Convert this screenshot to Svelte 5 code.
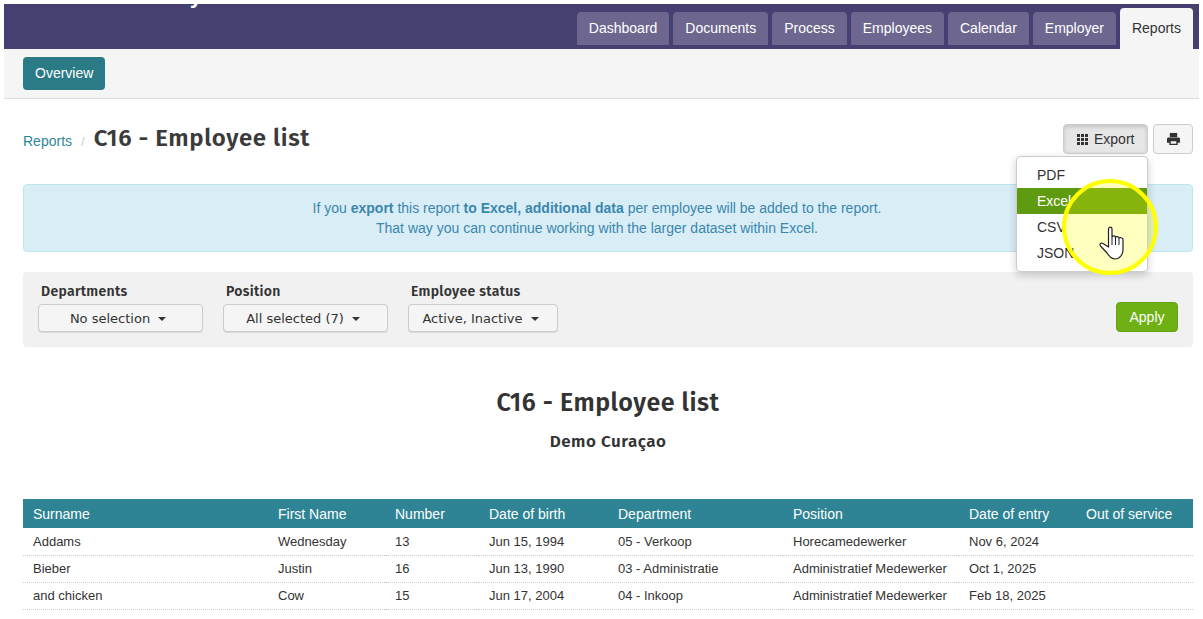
<script>
	const tabs = ['Dashboard', 'Documents', 'Process', 'Employees', 'Calendar', 'Employer'];

	const filters = [
		{ label: 'Departments', value: 'No selection', width: 165 },
		{ label: 'Position', value: 'All selected (7)', width: 165 },
		{ label: 'Employee status', value: 'Active, Inactive', width: 150 }
	];

	const columns = ['Surname', 'First Name', 'Number', 'Date of birth', 'Department', 'Position', 'Date of entry', 'Out of service'];

	const rows = [
		['Addams', 'Wednesday', '13', 'Jun 15, 1994', '05 - Verkoop', 'Horecamedewerker', 'Nov 6, 2024', ''],
		['Bieber', 'Justin', '16', 'Jun 13, 1990', '03 - Administratie', 'Administratief Medewerker', 'Oct 1, 2025', ''],
		['and chicken', 'Cow', '15', 'Jun 17, 2004', '04 - Inkoop', 'Administratief Medewerker', 'Feb 18, 2025', '']
	];
</script>

<div class="page">
	<header class="topbar">
		<span class="brand">y</span>
		<nav class="tabs">
			{#each tabs as tab}
				<a class="tab" href="#top">{tab}</a>
			{/each}
			<a class="tab active" href="#top">Reports</a>
		</nav>
	</header>

	<div class="subnav">
		<button class="overview">Overview</button>
	</div>

	<main class="content">
		<div class="titlebar">
			<div class="crumbs">
				<a href="#top">Reports</a>
				<span class="slash">/</span>
				<h1>C16 - Employee list</h1>
			</div>
			<div class="actions">
				<button class="btn pressed">
					<svg width="11" height="11" viewBox="0 0 11 11" fill="#333">
						<rect x="0" y="0" width="3" height="3" /><rect x="4" y="0" width="3" height="3" /><rect x="8" y="0" width="3" height="3" />
						<rect x="0" y="4" width="3" height="3" /><rect x="4" y="4" width="3" height="3" /><rect x="8" y="4" width="3" height="3" />
						<rect x="0" y="8" width="3" height="3" /><rect x="4" y="8" width="3" height="3" /><rect x="8" y="8" width="3" height="3" />
					</svg>
					Export
				</button>
				<button class="btn print" aria-label="Print">
					<svg width="13" height="14" viewBox="0 0 14 14" fill="#333">
						<path d="M3 0.500h8v4.500H3z" />
						<path fill-rule="evenodd" d="M1.500 5.500h11A1.500 1.500 0 0 1 14 7v4h-2.500v2.500h-9V11H0V7a1.500 1.500 0 0 1 1.500-1.500zM4 9.500v2.500h6V9.500z" />
					</svg>
				</button>

				<div class="menu">
					<div class="item">PDF</div>
					<div class="item hover">Excel</div>
					<div class="item">CSV</div>
					<div class="item">JSON</div>
				</div>

				<div class="spot"></div>
				<svg class="hand" width="27" height="34" viewBox="0 0 27 34">
					<path d="M9.500 3c0-2.500 3.500-2.500 3.500 0v8c0-1.500 3.500-1.500 3.500.5 0-1.200 3.500-1.200 3.500.8 0-1 4-.8 4 1.200V24c0 4-3 9-8 9-4 0-6-3-8-6l-6.500-7c-1.500-2 .5-3.500 2.500-2.500L9.500 21z" fill="#fff" stroke="#222" stroke-width="1.200" stroke-linejoin="round" />
					<path d="M13 11v8M16.500 11.500v7.500M20 12.300v6.700" stroke="#222" stroke-width="1" fill="none" />
				</svg>
			</div>
		</div>

		<div class="notice">
			<p>If you <strong>export</strong> this report <strong>to Excel, additional data</strong> per employee will be added to the report.</p>
			<p>That way you can continue working with the larger dataset within Excel.</p>
		</div>

		<div class="filters">
			{#each filters as filter}
				<div class="filter" style="width: {filter.width}px">
					<span class="filter-label">{filter.label}</span>
					<button class="select">{filter.value}<i class="caret"></i></button>
				</div>
			{/each}
			<button class="apply">Apply</button>
		</div>

		<div class="report-head">
			<h2>C16 - Employee list</h2>
			<h3>Demo Curaçao</h3>
		</div>

		<table>
			<thead>
				<tr>
					{#each columns as col}
						<th>{col}</th>
					{/each}
				</tr>
			</thead>
			<tbody>
				{#each rows as row}
					<tr>
						{#each row as cell}
							<td>{cell}</td>
						{/each}
					</tr>
				{/each}
			</tbody>
		</table>
	</main>
</div>

<style>
	:global(body) {
		margin: 0;
		background: #fff;
	}

	.page {
		width: 1203px;
		height: 619px;
		overflow: hidden;
		box-sizing: border-box;
		padding: 4px 4px 0;
		font-family: 'Liberation Sans', Arial, sans-serif;
		font-size: 14px;
		color: #333;
	}

	.topbar {
		position: relative;
		height: 45px;
		background: #463f72;
		display: flex;
		justify-content: flex-end;
		align-items: flex-end;
		overflow: hidden;
	}

	.brand {
		position: absolute;
		left: 185px;
		top: -19px;
		font-family: 'DejaVu Sans', sans-serif;
		font-weight: 700;
		font-size: 20px;
		color: #fff;
	}

	.tabs {
		display: flex;
		gap: 4px;
		align-items: flex-end;
		padding-right: 6px;
	}

	.tab {
		display: block;
		height: 33px;
		line-height: 33px;
		margin-bottom: 4px;
		padding: 0 12px;
		background: #6d678f;
		color: #fff;
		border-radius: 4px 4px 0 0;
		text-decoration: none;
	}

	.tab.active {
		height: 41px;
		line-height: 41px;
		margin-bottom: 0;
		background: #f5f5f5;
		color: #333;
	}

	.subnav {
		height: 50px;
		box-sizing: border-box;
		background: #f5f5f5;
		border-bottom: 1px solid #ddd;
		padding: 8px 19px 0;
	}

	.overview {
		height: 33px;
		padding: 0 12px 1px;
		border: 0;
		border-radius: 4px;
		background: #2a7b85;
		color: #fff;
		font: inherit;
	}

	.content {
		padding: 0 6px 0 19px;
	}

	.titlebar {
		display: flex;
		justify-content: space-between;
		height: 85px;
	}

	.crumbs {
		display: flex;
		align-items: baseline;
		padding-top: 24px;
	}

	.crumbs a {
		color: #2e8898;
		text-decoration: none;
	}

	.slash {
		color: #ccc;
		margin: 0 9px;
		font-size: 13px;
	}

	h1 {
		margin: 0;
		font-family: 'Fira Sans', 'Open Sans', sans-serif;
		font-size: 24px;
		font-weight: 600;
		letter-spacing: 0.6px;
		line-height: 30px;
		color: #3b3b3b;
	}

	.actions {
		position: relative;
		display: flex;
		gap: 5px;
		padding-top: 25px;
		align-items: flex-start;
	}

	.btn {
		height: 30px;
		display: flex;
		align-items: center;
		gap: 6px;
		padding: 0 12px 0 13px;
		border: 1px solid #ccc;
		border-radius: 4px;
		background: #f5f5f5;
		color: #333;
		font: inherit;
		box-sizing: border-box;
	}

	.btn.pressed {
		width: 85px;
		background: #e6e6e6;
		box-shadow: inset 0 2px 4px rgba(0, 0, 0, 0.15);
	}

	.btn.print {
		width: 40px;
		justify-content: center;
		padding: 0;
	}

	.menu {
		position: absolute;
		top: 57px;
		left: -47px;
		width: 132px;
		box-sizing: border-box;
		padding: 5px 0;
		background: #fff;
		border: 1px solid #ccc;
		border-radius: 4px;
		box-shadow: 0 3px 8px rgba(0, 0, 0, 0.2);
		z-index: 2;
	}

	.item {
		height: 26px;
		line-height: 26px;
		padding: 0 20px;
		color: #333;
	}

	.item.hover {
		background: #5f9b10;
		color: #fff;
	}

	.spot {
		position: absolute;
		left: -1px;
		top: 80px;
		width: 96px;
		height: 96px;
		box-sizing: border-box;
		border-radius: 50%;
		border: 4px solid #ffff00;
		background: rgba(255, 255, 0, 0.25);
		z-index: 3;
	}

	.hand {
		position: absolute;
		left: 36px;
		top: 127px;
		z-index: 4;
	}

	.notice {
		height: 68px;
		box-sizing: border-box;
		padding: 13px 37px 0 15px;
		background: #d9edf7;
		border: 1px solid #bce8f1;
		border-radius: 4px;
		color: #3a87ad;
		text-align: center;
		line-height: 20px;
	}

	.notice p {
		margin: 0;
	}

	.filters {
		display: flex;
		align-items: flex-start;
		gap: 20px;
		height: 75px;
		margin-top: 20px;
		padding: 11px 15px 0;
		box-sizing: border-box;
		background: #f1f1f1;
		border-radius: 4px;
		position: relative;
	}

	.filter {
		display: flex;
		flex-direction: column;
		gap: 3px;
	}

	.filter-label {
		padding-left: 3px;
		font-family: 'Fira Sans', 'Open Sans', sans-serif;
		font-size: 14px;
		font-weight: 600;
		letter-spacing: 0.3px;
		line-height: 18px;
		color: #333;
	}

	.select {
		height: 28px;
		width: 100%;
		padding: 0 11px 0 6px;
		border: 1px solid #ccc;
		border-radius: 4px;
		background: #f5f5f5;
		font-family: 'DejaVu Sans', sans-serif;
		font-size: 13px;
		color: #333;
		box-shadow: 0 1px 1px rgba(0, 0, 0, 0.1);
	}

	.caret {
		display: inline-block;
		margin-left: 8px;
		vertical-align: middle;
		border-top: 4px solid #333;
		border-left: 4px solid transparent;
		border-right: 4px solid transparent;
	}

	.apply {
		height: 30px;
		margin-left: auto;
		margin-top: 19px;
		padding: 0 12px;
		width: 62px;
		border: 1px solid #65a30d;
		border-radius: 4px;
		background: #6fb015;
		color: #fff;
		font: inherit;
	}

	.report-head {
		text-align: center;
		height: 152px;
		padding-top: 40px;
		box-sizing: border-box;
		color: #333;
	}

	h2 {
		margin: 0;
		font-family: 'Fira Sans', 'Open Sans', sans-serif;
		font-size: 25px;
		font-weight: 600;
		letter-spacing: 0.5px;
		line-height: 32px;
	}

	h3 {
		margin: 12px 0 0;
		font-family: 'Fira Sans', 'Open Sans', sans-serif;
		font-size: 17px;
		font-weight: 600;
		letter-spacing: 0.5px;
		line-height: 22px;
	}

	table {
		width: 100%;
		border-collapse: collapse;
		table-layout: fixed;
	}

	th {
		box-sizing: border-box;
		height: 29px;
		padding: 0 10px;
		background: #2e8494;
		color: #fff;
		font-weight: 400;
		text-align: left;
	}

	td {
		box-sizing: border-box;
		height: 27px;
		padding: 0 10px;
		border-bottom: 1px dotted #ccc;
		font-size: 13px;
		color: #333;
	}

	th:nth-child(1) { width: 245px; }
	th:nth-child(2) { width: 117px; }
	th:nth-child(3) { width: 94px; }
	th:nth-child(4) { width: 129px; }
	th:nth-child(5) { width: 175px; }
	th:nth-child(6) { width: 176px; }
	th:nth-child(7) { width: 117px; }
</style>
